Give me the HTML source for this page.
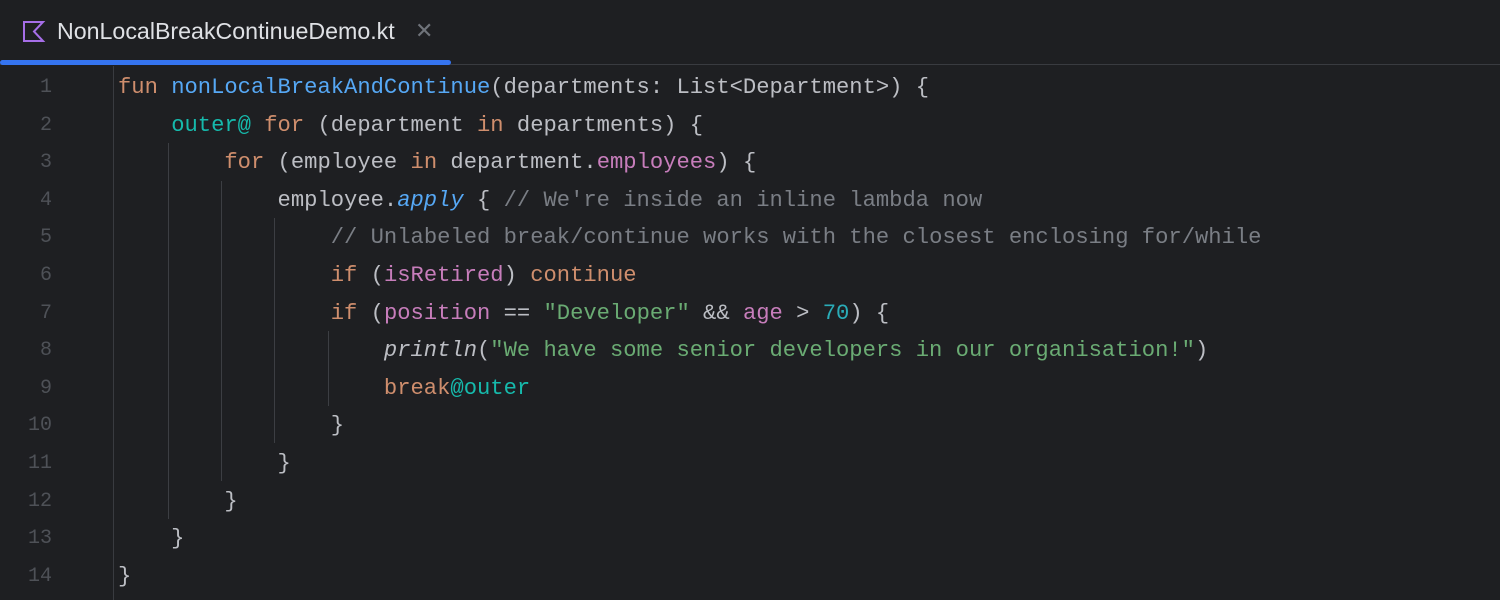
<!DOCTYPE html>
<html><head><meta charset="utf-8"><style>
body{margin:0;width:1500px;height:600px;background:#1e1f22;overflow:hidden;position:relative;font-family:"Liberation Sans",sans-serif}
.tab{position:absolute;left:0;top:0;width:1500px;height:65px;border-bottom:1px solid #393b40;box-sizing:border-box}
.tabname{position:absolute;left:57px;top:18px;font-size:23.2px;color:#dfe1e5}
.x{position:absolute;left:415px;top:18px;font-size:22px;color:#6f737a}
.ul{position:absolute;left:0;top:60px;width:451px;height:5px;background:#3574f0;border-radius:3px}
.gut{position:absolute;left:113px;top:66px;width:1px;height:534px;background:#393b40}
.g{position:absolute;width:1px;background:#3c3e43}
.ln{position:absolute;left:0;width:52px;text-align:right;font-family:"Liberation Mono",monospace;font-size:20px;color:#4e5157;line-height:37.6px}
.l{position:absolute;left:118px;font-family:"Liberation Mono",monospace;font-size:22.17px;line-height:37.6px;color:#bcbec4;white-space:pre}
.k{color:#cf8e6d}.f{color:#56a8f5}.t{color:#16baac}.p{color:#c77dbb}.s{color:#6aab73}.c{color:#7a7e85}.n{color:#2aacb8}.i{font-style:italic}
</style></head><body>
<div class="tab">
<svg style="position:absolute;left:22px;top:20px" width="24" height="24" viewBox="0 0 24 24"><path d="M2 2H21L12 11.5L21 21H2Z" fill="none" stroke="#a66ee8" stroke-width="2" stroke-linejoin="miter"/></svg>
<div class="tabname">NonLocalBreakContinueDemo.kt</div><div class="x">✕</div>
</div>
<div class="ul"></div>
<div class="gut"></div>
<div class="g" style="left:168px;top:143px;height:376px"></div>
<div class="g" style="left:221px;top:181px;height:300px"></div>
<div class="g" style="left:274px;top:218px;height:225px"></div>
<div class="g" style="left:328px;top:331px;height:75px"></div>
<div class="ln" style="top:69px">1</div><div class="ln" style="top:107px">2</div><div class="ln" style="top:144px">3</div><div class="ln" style="top:182px">4</div><div class="ln" style="top:219px">5</div><div class="ln" style="top:257px">6</div><div class="ln" style="top:295px">7</div><div class="ln" style="top:332px">8</div><div class="ln" style="top:370px">9</div><div class="ln" style="top:407px">10</div><div class="ln" style="top:445px">11</div><div class="ln" style="top:483px">12</div><div class="ln" style="top:520px">13</div><div class="ln" style="top:558px">14</div>
<div class="l" style="top:69px"><span class="k">fun</span> <span class="f">nonLocalBreakAndContinue</span>(departments: List&lt;Department&gt;) {</div>
<div class="l" style="top:107px">    <span class="t">outer@</span> <span class="k">for</span> (department <span class="k">in</span> departments) {</div>
<div class="l" style="top:144px">        <span class="k">for</span> (employee <span class="k">in</span> department.<span class="p">employees</span>) {</div>
<div class="l" style="top:182px">            employee.<span class="f i">apply</span> { <span class="c">// We're inside an inline lambda now</span></div>
<div class="l" style="top:219px">                <span class="c">// Unlabeled break/continue works with the closest enclosing for/while</span></div>
<div class="l" style="top:257px">                <span class="k">if</span> (<span class="p">isRetired</span>) <span class="k">continue</span></div>
<div class="l" style="top:295px">                <span class="k">if</span> (<span class="p">position</span> == <span class="s">"Developer"</span> &amp;&amp; <span class="p">age</span> &gt; <span class="n">70</span>) {</div>
<div class="l" style="top:332px">                    <span class="i">println</span>(<span class="s">"We have some senior developers in our organisation!"</span>)</div>
<div class="l" style="top:370px">                    <span class="k">break</span><span class="t">@outer</span></div>
<div class="l" style="top:407px">                }</div>
<div class="l" style="top:445px">            }</div>
<div class="l" style="top:483px">        }</div>
<div class="l" style="top:520px">    }</div>
<div class="l" style="top:558px">}</div>
</body></html>
